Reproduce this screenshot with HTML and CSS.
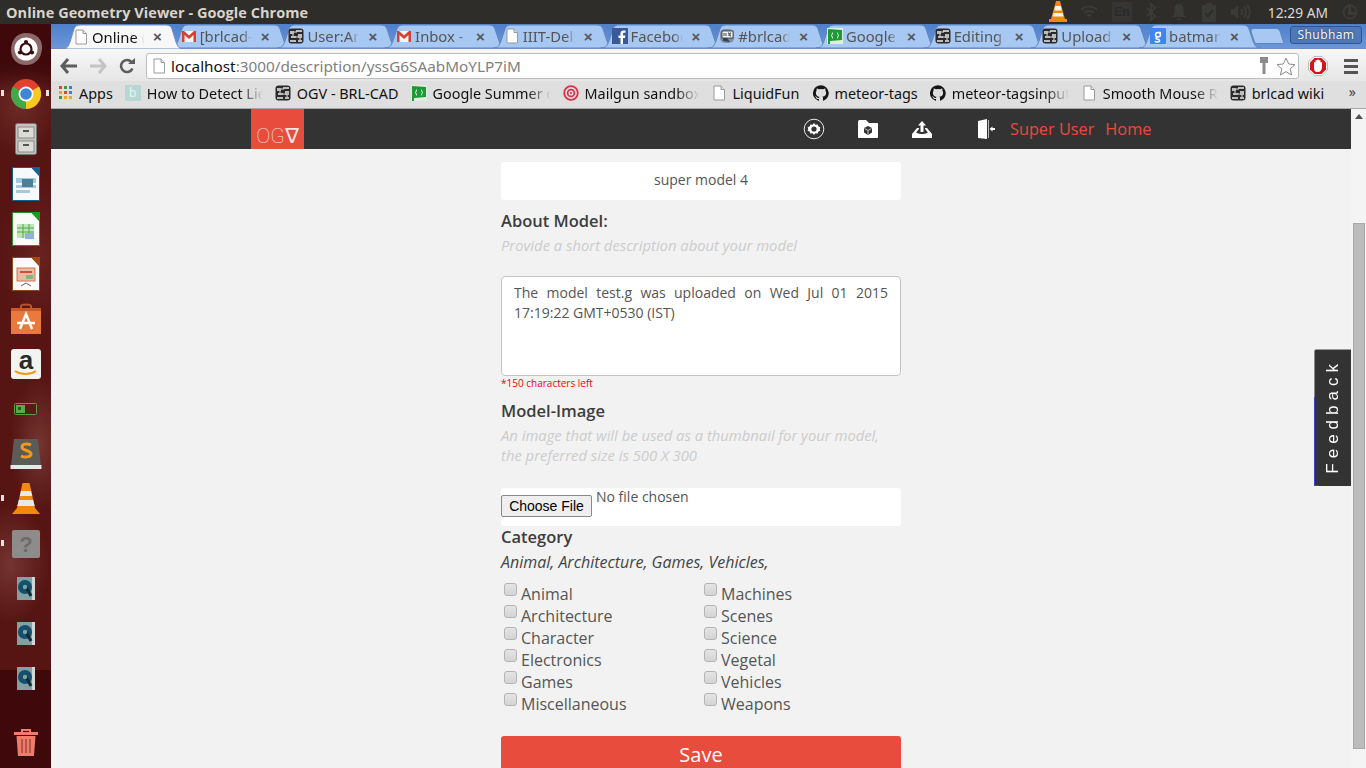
FILE: index.html
```html
<!DOCTYPE html>
<html lang="en">
<head>
<meta charset="utf-8">
<title>Online Geometry Viewer - Google Chrome</title>
<link rel="stylesheet" href="styles.css">
</head>
<body>
<svg class="defs" width="0" height="0" aria-hidden="true">
  <symbol id="doc" viewBox="0 0 16 16"><path d="M3 1h7l3.500 3.500V15H3z" fill="#fff" stroke="#9a9a9a"/><path d="M10 1v3.500h3.500" fill="#e4e4e4" stroke="#9a9a9a"/></symbol>
  <symbol id="gmail" viewBox="0 0 16 16"><path d="M1 3h14v11H1z" fill="#f4f4f4"/><path d="M1 14V3h2l5 4.500L13 3h2v11h-2.500V7L8 11 3.500 7v7z" fill="#d6402f"/></symbol>
  <symbol id="circuit" viewBox="0 0 16 16"><rect x=".5" y=".5" width="15" height="15" rx="3" fill="#2b2b2b"/><path d="M2 3h4v3H2zM8 2h6v2H8zM3 8h5v2H3zM10 6h4v4h-4zM2 12h6v2H2zM10 12h4v2h-4z" fill="#bdbdbd"/><path d="M6 4h3M8 9h2M5 6v2M12 10v2" stroke="#e6e6e6"/></symbol>
  <symbol id="fb" viewBox="0 0 16 16"><rect width="16" height="16" fill="#3b5998"/><path d="M11 16v-6h2l.4-2.500H11V6c0-.8.3-1.200 1.200-1.200h1.300V2.500H11.500C9.500 2.500 8.500 3.700 8.500 5.500v2H6.500V10h2v6z" fill="#fff"/></symbol>
  <symbol id="irc" viewBox="0 0 16 16"><rect x="1" y="1" width="14" height="14" rx="5" fill="#7d8fa8"/><rect x="3" y="3" width="11" height="7" fill="#eef1f5" stroke="#333" stroke-width=".8"/><path d="M5 5v3M7 5v3M9 5h1v3M12 5h-1v3h1" stroke="#222" stroke-width=".8" fill="none"/><path d="M4 10v3l7 1-3-4z" fill="#37404d"/></symbol>
  <symbol id="flag" viewBox="0 0 16 16"><rect width="16" height="16" fill="#dfeee3"/><path d="M1 1l14 1v10L3 13v3H1z" fill="#1d9a33"/><path d="M6 4.500C5 4.500 5.500 7 4.500 7.500 5.500 8 5 10.500 6 10.500M10 4.500c1 0 .5 2.500 1.500 3-1 .5-.5 3-1.500 3" stroke="#fff" fill="none"/></symbol>
  <symbol id="gplus" viewBox="0 0 16 16"><rect width="16" height="16" rx="1" fill="#3f85f2"/><path d="M11 4.500H8C6.300 4.500 5.500 5.500 5.500 6.800S6.500 9 8 9s2.500-1 2.500-2.200S9.500 4.500 8 4.500M7 9c-1.500 1-1.500 1.500 0 2 2 .6 3 1 2.500 2.200S5.500 14.500 5 13" fill="none" stroke="#fff" stroke-width="1.500"/></symbol>
  <symbol id="gh" viewBox="0 0 16 16"><path fill="#161514" d="M8 .2a8 8 0 0 0-2.500 15.600c.4.100.5-.2.500-.4v-1.400c-2.200.5-2.700-1-2.700-1-.4-.9-.9-1.200-.9-1.200-.7-.5.100-.5.100-.5.800.1 1.200.8 1.200.8.700 1.200 1.900.9 2.300.7.100-.5.300-.9.500-1.100-1.800-.2-3.600-.9-3.600-4 0-.9.300-1.600.8-2.100-.1-.2-.4-1 .1-2.100 0 0 .7-.2 2.200.8a7.600 7.600 0 0 1 4 0c1.500-1 2.200-.8 2.200-.8.400 1.100.2 1.900.1 2.100.5.600.8 1.300.8 2.100 0 3.100-1.900 3.700-3.700 3.900.3.300.6.800.6 1.500v2.200c0 .2.100.5.500.4A8 8 0 0 0 8 .2z"/></symbol>
  <symbol id="mail" viewBox="0 0 16 16"><circle cx="8" cy="8" r="6.800" fill="none" stroke="#d9304a" stroke-width="1.800"/><circle cx="8" cy="8" r="3.400" fill="none" stroke="#d9304a" stroke-width="1.700"/><circle cx="8" cy="8" r="1.100" fill="#d9304a"/></symbol>
  <symbol id="qdoc" viewBox="0 0 18 23"><rect width="18" height="23" fill="#85a0a5"/><rect x="15" width="3" height="23" fill="#cfd6d6"/><circle cx="8" cy="10" r="7" fill="#14506e"/><path d="M9 10l5 9" stroke="#102a36" stroke-width="3"/><circle cx="8" cy="10" r="2.200" fill="#85a0a5"/></symbol>
</svg>

<header class="panel">
  <span class="panel-title">Online Geometry Viewer - Google Chrome</span>
  <div class="tray">
    <svg class="tray-vlc" width="18" height="22" viewBox="0 0 18 22"><path d="M7 0h4l5 18h2v3H0v-3h2z" fill="#f08a0c"/><path d="M6.200 5h5.600l1 4.500H5.200zM4.600 12h8.800l1 3.500H3.600z" fill="#f2f2f2"/></svg>
    <svg class="tray-i" width="18" height="14" viewBox="0 0 18 14"><path d="M1 5a11 11 0 0 1 16 0M4 8a7 7 0 0 1 10 0M7 11a3 3 0 0 1 4 0" stroke="#3a3a38" stroke-width="2" fill="none"/></svg>
    <span class="tray-en">En</span>
    <svg class="tray-i" width="12" height="18" viewBox="0 0 12 18"><path d="M2 5l8 8-4 4V1l4 4-8 8" stroke="#3a3a38" stroke-width="2" fill="none"/></svg>
    <svg class="tray-i" width="16" height="17" viewBox="0 0 16 17"><path d="M8 0c3 0 4.500 2 4.500 5v5L15 13H1l2.500-3V5C3.500 2 5 0 8 0zM6 14.500h4V16H6z" fill="#3a3a38"/></svg>
    <svg class="tray-i" width="16" height="20" viewBox="0 0 16 20"><path d="M1 3h4V1h6v2h4v17H1z" fill="#3a3a38"/><path d="M4 11l3 3 5-6" stroke="#2d2c29" stroke-width="2" fill="none"/></svg>
    <svg class="tray-i" width="20" height="14" viewBox="0 0 20 14"><path d="M0 4h3l4-4v14l-4-4H0z" fill="#3a3a38"/><path d="M10 4a4 4 0 0 1 0 6M13 2a7 7 0 0 1 0 10M16 0a10 10 0 0 1 0 14" stroke="#3a3a38" stroke-width="2" fill="none"/></svg>
    <span class="clock">12:29 AM</span>
    <svg class="tray-i" width="16" height="16" viewBox="0 0 16 16"><circle cx="8" cy="8" r="6.500" stroke="#3a3a38" stroke-width="2" fill="none"/><path d="M6 0h3v8h6v3H6z" fill="#3a3a38"/></svg>
  </div>
</header>

<div class="desktop">
  <nav class="launcher">
    <div class="lnc">
      <svg width="38" height="38" viewBox="0 0 38 38"><path d="M19 3c10 0 17 6 16 16s-7 16-16 16S4 29 4 20 9 3 19 3z" fill="#d8c8c6" opacity=".5"/><circle cx="19" cy="19" r="11.500" fill="#fff"/><circle cx="19" cy="19" r="5.500" fill="none" stroke="#3a0e10" stroke-width="2.200"/><circle cx="19" cy="12" r="2.100" fill="#3a0e10"/><circle cx="13" cy="22.500" r="2.100" fill="#3a0e10"/><circle cx="25" cy="22.500" r="2.100" fill="#3a0e10"/></svg>
    </div>
    <div class="lnc">
      <i class="pip pip-l"></i><i class="pip pip-r"></i>
      <svg width="30" height="30" viewBox="0 0 30 30"><circle cx="15" cy="15" r="15" fill="#e2412f"/><path d="M15 15L28 7.500A15 15 0 0 1 15 30z" fill="#f6c91f"/><path d="M15 15L15 30A15 15 0 0 1 2 7.500z" fill="#45a848"/><circle cx="15" cy="15" r="7.500" fill="#fff"/><circle cx="15" cy="15" r="5.800" fill="#3f85d8"/></svg>
    </div>
    <div class="lnc">
      <svg width="22" height="32" viewBox="0 0 22 32"><rect x=".5" y=".5" width="21" height="31" rx="2" fill="#c4c4be" stroke="#777"/><rect x="3" y="4" width="16" height="11" fill="#dcdcd6" stroke="#8a8a84"/><rect x="3" y="18" width="16" height="11" fill="#dcdcd6" stroke="#8a8a84"/><path d="M8 8h6M8 22h6" stroke="#555" stroke-width="2"/></svg>
    </div>
    <div class="lnc">
      <svg width="28" height="34" viewBox="0 0 28 34"><path d="M.5.500h19L27.500 9v24.500H.5z" fill="#f7fafc" stroke="#145e8c"/><path d="M19 0h9v9z" fill="#10609a"/><rect x="4" y="11" width="20" height="5" fill="#a5c8de"/><rect x="4" y="18" width="20" height="3" fill="#a5c8de"/><rect x="4" y="23" width="14" height="3" fill="#a5c8de"/><rect x="10" y="12" width="11" height="8" fill="#4d7f96"/></svg>
    </div>
    <div class="lnc">
      <svg width="28" height="34" viewBox="0 0 28 34"><path d="M.5.500h19L27.500 9v24.500H.5z" fill="#f7fcf7" stroke="#2e8f2e"/><path d="M19 0h9v9z" fill="#17a017"/><path d="M5 12h17v14H5z" fill="#bfe3bb"/><path d="M5 16h17M5 20h17M11 12v14M17 12v14" stroke="#4dab4d"/><rect x="13" y="21" width="9" height="6" fill="#8db4d8"/></svg>
    </div>
    <div class="lnc">
      <svg width="28" height="34" viewBox="0 0 28 34"><path d="M.5.500h19L27.500 9v24.500H.5z" fill="#fafafa" stroke="#8a4a20"/><path d="M19 0h9v9z" fill="#a04a12"/><rect x="5" y="11" width="18" height="13" fill="#eeb9a2" stroke="#c97a5a"/><path d="M8 15h12" stroke="#c0553a" stroke-width="2"/><rect x="14" y="18" width="7" height="4" fill="#8cb37f"/><path d="M9 29l5-3 5 3" stroke="#666" fill="none"/></svg>
    </div>
    <div class="lnc">
      <svg width="30" height="31" viewBox="0 0 30 31"><path d="M10 6V3c0-2 10-2 10 0v3" stroke="#c0532a" stroke-width="2" fill="none"/><path d="M0 5h30v26H0z" fill="#ea7a3c"/><path d="M0 5h30v3H0z" fill="#c85a28"/><path d="M9 26l6-15 6 15M6 20h18" stroke="#fff" stroke-width="2.500" fill="none"/></svg>
    </div>
    <div class="lnc">
      <svg width="30" height="30" viewBox="0 0 30 30"><rect width="30" height="30" rx="3" fill="#f3f3f1"/><text x="15" y="20" class="amz">a</text><path d="M4 22c6 4 15 4 21 0" stroke="#f29a16" stroke-width="2" fill="none"/></svg>
    </div>
    <div class="lnc">
      <svg width="24" height="12" viewBox="0 0 24 12"><rect x=".5" y=".5" width="22" height="11" rx="1" fill="#5a1a18" stroke="#5a9a4a"/><rect x="2" y="2" width="9" height="8" fill="#5fa84a"/><rect x="4" y="4" width="3" height="3" fill="#2c5a22"/></svg>
    </div>
    <div class="lnc">
      <svg width="32" height="32" viewBox="0 0 32 32"><path d="M4 1h24l3 27H1z" fill="#5b5b58"/><rect x=".5" y="27" width="31" height="4" fill="#e8e8e8"/><path d="M21 7c-4-2-9-1-9 2 0 4 9 3 9 7 0 3-6 4-10 2" stroke="#f29a16" stroke-width="3" fill="none"/></svg>
    </div>
    <div class="lnc">
      <i class="pip pip-l"></i>
      <svg width="28" height="32" viewBox="0 0 28 32"><path d="M10.500 0h7L23 25l5 6H0l5-6z" fill="#ef8a0e"/><path d="M9 8h10l1.300 5H7.800zM6.800 17h14.400l1.500 6H5.300z" fill="#e8e8e8"/></svg>
    </div>
    <div class="lnc">
      <i class="pip pip-l"></i>
      <svg width="28" height="28" viewBox="0 0 28 28"><rect width="28" height="28" rx="2" fill="#8e8c8a"/><text x="14" y="22" class="qmark">?</text></svg>
    </div>
    <div class="lnc"><svg class="qdoc"><use href="#qdoc"/></svg></div>
    <div class="lnc"><svg class="qdoc"><use href="#qdoc"/></svg></div>
    <div class="lnc"><svg class="qdoc"><use href="#qdoc"/></svg></div>
    <div class="lnc lnc-trash">
      <svg width="24" height="27" viewBox="0 0 24 27"><path d="M8 3V1h8v2" stroke="#ef7b6b" stroke-width="2" fill="none"/><path d="M0 3h24v3H0z" fill="#ef7b6b"/><path d="M2.500 7h19L20 27H4z" fill="#ef7b6b"/><path d="M8 10v14M12 10v14M16 10v14" stroke="#a04a42" stroke-width="1.500"/></svg>
    </div>
  </nav>

  <div class="browser">
    <div class="tabstrip">
      <div class="tab tab-active"><svg class="fav"><use href="#doc"/></svg><span class="tab-label">Online (</span><span class="tab-x">×</span></div>
      <div class="tab"><svg class="fav"><use href="#gmail"/></svg><span class="tab-label">[brlcad-</span><span class="tab-x">×</span></div>
      <div class="tab"><svg class="fav"><use href="#circuit"/></svg><span class="tab-label">User:An</span><span class="tab-x">×</span></div>
      <div class="tab"><svg class="fav"><use href="#gmail"/></svg><span class="tab-label">Inbox - r</span><span class="tab-x">×</span></div>
      <div class="tab"><svg class="fav"><use href="#doc"/></svg><span class="tab-label">IIIT-Delh</span><span class="tab-x">×</span></div>
      <div class="tab"><svg class="fav"><use href="#fb"/></svg><span class="tab-label">Faceboo</span><span class="tab-x">×</span></div>
      <div class="tab"><svg class="fav"><use href="#irc"/></svg><span class="tab-label">#brlcad</span><span class="tab-x">×</span></div>
      <div class="tab"><svg class="fav"><use href="#flag"/></svg><span class="tab-label">Google</span><span class="tab-x">×</span></div>
      <div class="tab"><svg class="fav"><use href="#circuit"/></svg><span class="tab-label">Editing</span><span class="tab-x">×</span></div>
      <div class="tab"><svg class="fav"><use href="#circuit"/></svg><span class="tab-label">Upload</span><span class="tab-x">×</span></div>
      <div class="tab"><svg class="fav"><use href="#gplus"/></svg><span class="tab-label">batman</span><span class="tab-x">×</span></div>
      <div class="newtab"></div>
      <div class="profile">Shubham</div>
    </div>

    <div class="toolbar">
      <svg class="tb-ic" width="18" height="16" viewBox="0 0 18 16"><path d="M8 1L2 8l6 7M2 8h15" stroke="#5d5d5d" stroke-width="3" fill="none"/></svg>
      <svg class="tb-ic" width="18" height="16" viewBox="0 0 18 16"><path d="M10 1l6 7-6 7M16 8H1" stroke="#c4c4c4" stroke-width="3" fill="none"/></svg>
      <svg class="tb-ic" width="16" height="16" viewBox="0 0 16 16"><path d="M13.500 10.500A6 6 0 1 1 12.500 4" stroke="#5d5d5d" stroke-width="2.600" fill="none"/><path d="M9 6h7V0z" fill="#5d5d5d"/></svg>
      <div class="omnibox">
        <svg class="fav"><use href="#doc"/></svg>
        <span class="url"><span class="url-host">localhost</span>:3000/description/yssG6SAabMoYLP7iM</span>
        <svg class="omni-key" width="10" height="18" viewBox="0 0 10 18"><path d="M1 0h8v6H6.500v11h-3V6H1z" fill="#8b8b8b"/></svg>
        <svg class="omni-star" width="20" height="19" viewBox="0 0 20 19"><path d="M10 1l2.700 6 6.300.6-4.800 4.200 1.500 6.200-5.700-3.400L4.300 18l1.500-6.200L1 7.600 7.300 7z" fill="#fff" stroke="#8b8b8b"/></svg>
      </div>
      <svg class="stop" width="20" height="20" viewBox="0 0 20 20"><path d="M6 .5h8L19.500 6v8L14 19.500H6L.5 14V6z" fill="#fff" stroke="#bbb"/><path d="M6.500 2h7L18 6.500v7L13.500 18h-7L2 13.500v-7z" fill="#d5141c"/><path d="M6 7c0-1.500 1.500-1.500 1.500 0V5c0-1.500 1.500-1.500 1.500 0V4.500c0-1.500 2-1.500 2 0V5c0-1.500 1.500-1.500 1.500 0v2c0-1.200 1.500-1.200 1.500 0v4c0 3-1.500 5-4.500 5S6 14 6 11z" fill="#fff"/></svg>
      <div class="menu"><i></i><i></i><i></i></div>
    </div>

    <div class="bookmarks">
      <div class="bm"><span class="apps"><i class="r"></i><i class="g"></i><i class="b"></i><i class="o"></i><i class="r"></i><i class="b"></i><i class="g"></i><i class="o"></i><i class="o"></i></span><span class="bm-label">Apps</span></div>
      <div class="bm"><span class="teal">b</span><span class="bm-label bm-fade w116">How to Detect Lie</span></div>
      <div class="bm"><svg class="fav"><use href="#circuit"/></svg><span class="bm-label">OGV - BRL-CAD</span></div>
      <div class="bm"><svg class="fav"><use href="#flag"/></svg><span class="bm-label bm-fade">Google Summer c</span></div>
      <div class="bm"><svg class="fav"><use href="#mail"/></svg><span class="bm-label bm-fade w114">Mailgun sandbox</span></div>
      <div class="bm"><svg class="fav"><use href="#doc"/></svg><span class="bm-label bm-wide">LiquidFun</span></div>
      <div class="bm"><svg class="fav"><use href="#gh"/></svg><span class="bm-label">meteor-tags</span></div>
      <div class="bm"><svg class="fav"><use href="#gh"/></svg><span class="bm-label bm-fade w117">meteor-tagsinput</span></div>
      <div class="bm"><svg class="fav"><use href="#doc"/></svg><span class="bm-label bm-fade w115">Smooth Mouse Re</span></div>
      <div class="bm"><svg class="fav"><use href="#circuit"/></svg><span class="bm-label">brlcad wiki</span></div>
      <span class="bm-more">»</span>
    </div>

    <div class="viewport">
      <div class="page">
        <div class="navbar">
          <div class="logo">OG∇</div>
          <div class="nav-icons">
            <svg width="22" height="22" viewBox="0 0 22 22"><circle cx="11" cy="11" r="9.800" fill="none" stroke="#e8e8e8"/><path d="M11 5l1.400 1.700 2.200-.3.800 2 2 .9-.6 1.700.6 1.700-2 .9-.8 2-2.200-.3L11 17l-1.400-1.700-2.200.3-.8-2-2-.9.600-1.700-.6-1.700 2-.9.800-2 2.200.3z" fill="#fff"/><circle cx="11" cy="11" r="2.600" fill="#333"/></svg>
            <svg class="ni-folder" width="20" height="18" viewBox="0 0 20 18"><path d="M0 2c0-1 .5-2 1.500-2H8l3 3h8c.6 0 1 .4 1 1v13c0 .6-.4 1-1 1H1c-.6 0-1-.4-1-1z" fill="#fff"/><path d="M10 6l4 2v4.500L10 15l-4-2.500V8z" fill="#333"/><path d="M6.500 8.500L10 10.500l3.500-2M10 10.500V14.500" stroke="#fff" stroke-width=".7" fill="none"/></svg>
            <svg class="ni-upload" width="20" height="17" viewBox="0 0 20 17"><path d="M10 0l4 4.500h-2.500V11h-3V4.500H6z" fill="#fff"/><path d="M5 7L0 13v4h20v-4l-5-6h-2v1l3 3.500c-1 0-1.500 1.500-6 1.500s-5-1.500-6-1.500L7 8V7z" fill="#fff"/></svg>
            <svg class="ni-door" width="17" height="20" viewBox="0 0 17 20"><path d="M0 2l9-2v20l-9-1z" fill="#fff"/><path d="M10 1h1v18h-1z" fill="#bbb"/><path d="M11.500 10l3-2.500V9H17v2h-2.500v1.500z" fill="#fff"/></svg>
          </div>
          <a class="nav-link nav-user">Super User</a>
          <a class="nav-link">Home</a>
        </div>

        <form class="form">
          <div class="title-input">super model 4</div>
          <h3 class="lbl lbl-about">About Model:</h3>
          <p class="hint">Provide a short description about your model</p>
          <div class="textarea">The model test.g was uploaded on Wed Jul 01 2015 17:19:22 GMT+0530 (IST)</div>
          <p class="left">*150 characters left</p>
          <h3 class="lbl lbl-image">Model-Image</h3>
          <p class="hint">An image that will be used as a thumbnail for your model,<br>the preferred size is 500 X 300</p>
          <div class="filebox"><button type="button" class="filebtn">Choose File</button><span class="nofile">No file chosen</span></div>
          <h3 class="lbl lbl-cat">Category</h3>
          <p class="cat-list">Animal, Architecture, Games, Vehicles,</p>
          <div class="cats">
            <label class="cat"><input type="checkbox">Animal</label>
            <label class="cat"><input type="checkbox">Machines</label>
            <label class="cat"><input type="checkbox">Architecture</label>
            <label class="cat"><input type="checkbox">Scenes</label>
            <label class="cat"><input type="checkbox">Character</label>
            <label class="cat"><input type="checkbox">Science</label>
            <label class="cat"><input type="checkbox">Electronics</label>
            <label class="cat"><input type="checkbox">Vegetal</label>
            <label class="cat"><input type="checkbox">Games</label>
            <label class="cat"><input type="checkbox">Vehicles</label>
            <label class="cat"><input type="checkbox">Miscellaneous</label>
            <label class="cat"><input type="checkbox">Weapons</label>
          </div>
          <button type="button" class="save">Save</button>
        </form>
        <div class="feedback"><span>Feedback</span></div>
      </div>
      <div class="scrollbar"><span class="sb-up"></span><span class="sb-thumb"></span></div>
    </div>
  </div>
</div>
</body>
</html>
```

FILE: styles.css
```css
* { box-sizing: border-box; }
html, body { margin: 0; height: 100%; overflow: hidden; }
body { width: 1366px; height: 768px; display: flex; flex-direction: column; font-family: "Open Sans", sans-serif; background: #2d2c29; }
.defs { position: absolute; }

/* top panel */
.panel { height: 24px; flex: none; display: flex; align-items: center; justify-content: space-between; background: #2e2d2a; padding-left: 6px; }
.panel-title { font: 700 14.500px "Open Sans", sans-serif; letter-spacing: .05px; color: #d8d4cc; }
.tray { display: flex; align-items: center; }
.tray-vlc { margin-right: 13px; }
.tray-i { flex: none; }
.tray-en { width: 20px; height: 20px; background: #353533; color: #2a2a28; font: 700 12px/20px "Liberation Sans", sans-serif; text-align: center; margin: 0 13px 0 14px; }
.tray > .tray-i:nth-of-type(3) { margin-right: 14px; }
.tray > .tray-i:nth-of-type(4) { margin-right: 14px; }
.tray > .tray-i:nth-of-type(5) { margin-right: 14px; }
.tray > .tray-i:nth-of-type(6) { margin-right: 15px; }
.clock { font: 400 13.800px "Noto Sans", sans-serif; color: #dfdbd2; margin: 0 14px 0 2px; white-space: nowrap; }
.tray > .tray-i:last-child { margin-right: 8px; }

.desktop { flex: 1; display: flex; min-height: 0; }

/* launcher */
.launcher {
  width: 51px; flex: none; display: flex; flex-direction: column; align-items: center; padding-top: 2px;
  background:
    linear-gradient(#3f090c 0, #3f090c 40px, rgba(63,9,12,0) 72px, rgba(63,9,12,0) 645.500px, #3f090c 646px),
    radial-gradient(ellipse 30px 70px at 40px 420px, #733530 0, rgba(115,53,48,0) 100%),
    radial-gradient(ellipse 40px 60px at 10px 540px, #743430 0, rgba(116,52,48,0) 100%),
    radial-gradient(ellipse 40px 50px at 20px 80px, #6e2c27 0, rgba(110,44,39,0) 100%),
    radial-gradient(ellipse 40px 80px at 40px 230px, #682220 0, rgba(104,34,32,0) 100%),
    #561413;
}
.lnc { position: relative; height: 45px; width: 51px; flex: none; display: flex; align-items: center; justify-content: center; }
.lnc-trash { margin-top: 19px; }
.pip { position: absolute; top: 19px; width: 3px; height: 6px; background: #e8e2e0; }
.pip-l { left: 1px; }
.pip-r { right: 2px; }
.amz { font: 700 26px "Liberation Sans", sans-serif; fill: #2a2a2a; text-anchor: middle; }
.qmark { font: 700 22px "Liberation Sans", sans-serif; fill: #6d6b69; text-anchor: middle; }
.qdoc { width: 18px; height: 23px; }

/* browser */
.browser { flex: 1; min-width: 0; display: flex; flex-direction: column; }
.tabstrip { height: 25px; flex: none; display: flex; align-items: flex-end; padding-left: 11px; background: linear-gradient(#4f7fcb, #6b97d9); border-bottom: 1px solid #6f8fc0; position: relative; }
.tab {
  width: 122px; height: 24px; flex: none; margin-right: -14.300px; display: flex; align-items: center; padding: 0 0 0 11px; color: #555; position: relative;
  background: url("data:image/svg+xml,%3Csvg xmlns='http://www.w3.org/2000/svg' width='122' height='24'%3E%3Cpath d='M0 24c5 0 6-2 8-7L12 5c1-3 3-4 6-4h86c3 0 5 1 6 4l4 12c2 5 3 7 8 7z' fill='%23a7c8f2' stroke='%235e86c0'/%3E%3C/svg%3E") no-repeat;
}
.tab-active { z-index: 2; color: #111; height: 25px; margin-bottom: -1px;
  background-image: url("data:image/svg+xml,%3Csvg xmlns='http://www.w3.org/2000/svg' width='122' height='25'%3E%3Cpath d='M0 25c5 0 6-2 8-7L12 5c1-3 3-4 6-4h86c3 0 5 1 6 4l4 13c2 5 3 7 8 7z' fill='%23f8f8f8' stroke='%236c8cc0'/%3E%3C/svg%3E"); }
.fav { width: 16px; height: 16px; flex: none; }
.tab-label { width: 52px; margin-left: 3px; font: 400 14.800px "Noto Sans", sans-serif; white-space: nowrap; overflow: hidden; -webkit-mask-image: linear-gradient(to right, #000 82%, transparent); mask-image: linear-gradient(to right, #000 82%, transparent); }
.tab-x { margin-left: 9px; font: 700 15px/1 "Liberation Sans", sans-serif; color: #555; }
.newtab { width: 30px; height: 16px; margin: 0 0 4px 5px; flex: none; background: #a7c8f2; border: 1px solid #5e86c0; border-radius: 4px 3px 2px 2px; transform: skewX(18deg); }
.profile { width: 72px; height: 18px; position: absolute; right: 4px; top: 2px; background: #4f78b8; border: 1px solid #2f5590; border-radius: 3px; color: #f4f4f4; font: 400 12px/16px "Noto Sans", sans-serif; letter-spacing: .4px; text-align: center; text-shadow: 0 0 2px #1c3a66; }

.toolbar { height: 32px; flex: none; display: flex; align-items: center; padding: 2px 0 0 9px; background: linear-gradient(#f7f7f7, #e6e6e6); }
.tb-ic { flex: none; margin-right: 11px; }
.tb-ic:nth-child(2) { margin-right: 12px; }
.omnibox { width: 1153px; height: 26px; flex: none; display: flex; align-items: center; padding: 0 1px 0 4px; background: #fff; border: 1px solid #bdbdbd; border-radius: 3px; }
.omnibox .fav { margin-right: 1px; }
.url { flex: 1; margin-left: 3px; font: 400 15.300px "Noto Sans", sans-serif; color: #808080; white-space: nowrap; }
.url-host { color: #111; }
.omni-key { margin-right: 7px; }
.omni-star { margin-right: 1px; }
.stop { margin-left: 9px; flex: none; }
.menu { margin-left: 16px; width: 14px; display: flex; flex-direction: column; gap: 3px; flex: none; }
.menu i { height: 3px; background: #555; display: block; }

.bookmarks { height: 28px; flex: none; display: flex; align-items: center; padding: 0 0 3px 8px; background: #dfdfdf; border-bottom: 1px solid #a8a8a8; position: relative; }
.bm { display: flex; align-items: center; margin-right: 12px; flex: none; }
.bm .fav { margin-right: 6px; }
.bm-label { max-width: 118px; font: 400 14.400px "Noto Sans", sans-serif; color: #111; white-space: nowrap; overflow: hidden; }
.bm-fade { -webkit-mask-image: linear-gradient(to right, #000 80%, transparent); mask-image: linear-gradient(to right, #000 80%, transparent); }
.w114 { max-width: 114px; }
.w115 { max-width: 115px; }
.w116 { max-width: 116px; }
.w117 { max-width: 117px; }
.bm-wide { min-width: 68px; }
.apps { width: 14px; height: 14px; display: grid; grid-template-columns: repeat(3, 3px); grid-auto-rows: 3px; gap: 2px; margin-right: 6px; flex: none; }
.apps i { display: block; }
.apps .r { background: #e2452f; }
.apps .g { background: #3b9a3f; }
.apps .b { background: #3a7fd9; }
.apps .o { background: #f2a51a; }
.teal { width: 16px; height: 16px; margin-right: 6px; background: #b6d8d5; color: #e8f3f2; font: 400 12px/16px "Noto Sans", sans-serif; text-align: center; flex: none; }
.bm-more { position: absolute; right: 10px; top: 1px; font: 400 14px "Noto Sans", sans-serif; color: #444; }

/* page */
.viewport { flex: 1; min-height: 0; display: flex; }
.page { flex: 1; min-width: 0; position: relative; background: #f2f2f2; overflow: hidden; }
.navbar { height: 40px; display: flex; align-items: center; background: #333; padding-left: 200px; }
.logo { width: 53px; height: 40px; background: #e74c3c; color: #fbe3df; font: 100 21px/54px "Roboto", sans-serif; text-align: center; overflow: hidden; }
.nav-icons { display: flex; align-items: center; margin-left: 499px; }
.nav-icons .ni-folder { margin-left: 33px; }
.nav-icons .ni-upload { margin-left: 34px; }
.nav-icons .ni-door { margin-left: 46px; }
.nav-link { color: #e74c3c; font: 400 16.300px/22px "Open Sans", sans-serif; margin: 0 0 0 11px; }
.nav-user { margin-left: 15px; }

.form { width: 400px; margin: 13px 0 0 450px; color: #555; }
.title-input { height: 38px; background: #fff; border-radius: 3px; font-size: 14px; line-height: 36px; text-align: center; }
.lbl { margin: 0; font-size: 16.500px; font-weight: 600; line-height: 22px; color: #3d3d3d; }
.lbl-about { margin-top: 10px; }
.lbl-image { margin-top: 10px; }
.lbl-cat { margin-top: 0; }
.hint { margin: 3px 0 0; font-size: 14.800px; font-style: italic; line-height: 20px; color: #ccc; }
.textarea { height: 100px; margin-top: 21px; padding: 6px 12px; background: #fff; border: 1px solid #c4c4c4; border-radius: 4px; font-size: 14px; line-height: 20px; text-align: justify; }
.left { margin: 0; font-size: 10px; line-height: 14px; color: #f00; }
.filebox { height: 38px; margin-top: 23px; display: flex; background: #fff; border-radius: 3px; }
.filebtn { width: 91px; height: 22px; margin-top: 7px; padding: 0; background: #efefef; border: 1px solid #888; border-radius: 2px; color: #000; font: 400 14px "Liberation Sans", sans-serif; }
.nofile { margin-left: 4px; font-size: 14px; line-height: 18px; }
.cat-list { margin: 3px 0 0; font-size: 16px; font-style: italic; line-height: 22px; color: #444; }
.cats { display: grid; grid-template-columns: 200px 200px; grid-auto-rows: 22px; margin-top: 10px; }
.cat { display: flex; font-size: 16px; line-height: 22px; padding-left: 3px; color: #555; }
.cat input { appearance: none; -webkit-appearance: none; width: 13px; height: 13px; margin: 0 4px 0 0; background: linear-gradient(#e4e4e4, #d4d4d4); border: 1px solid #b4b4b4; border-radius: 3px; flex: none; }
.save { display: block; width: 400px; height: 40px; margin-top: 21px; padding: 0 0 3px; border: 0; border-radius: 3px; background: #e74c3c; color: #fff; font: 400 20px "Open Sans", sans-serif; }
.feedback {
  position: absolute; right: 0; top: 240px; width: 37px; height: 137px; display: flex; align-items: center; justify-content: center; padding-bottom: 3px; border-radius: 3px 0 0 0;
  background:
    linear-gradient(#8a8a8a 48px, #3f3fd0 48px) left top / 1px 100% no-repeat,
    linear-gradient(#3f3fd0, #3f3fd0) left bottom / 5px 1px no-repeat,
    linear-gradient(#999, #999) left top / 100% 1px no-repeat,
    #333;
}
.feedback span { writing-mode: vertical-rl; transform: rotate(180deg); color: #fff; font: 400 17px "Liberation Sans", sans-serif; letter-spacing: 5px; }

.scrollbar { width: 15px; flex: none; display: flex; flex-direction: column; align-items: center; background: #f4f4f4; }
.sb-up { margin-top: 5px; width: 0; height: 0; border: 4px solid transparent; border-top: 0; border-bottom: 5px solid #505050; }
.sb-thumb { width: 12px; height: 526px; margin-top: 104px; background: #bcbcbc; border: 1px solid #a8a8a8; }
```
